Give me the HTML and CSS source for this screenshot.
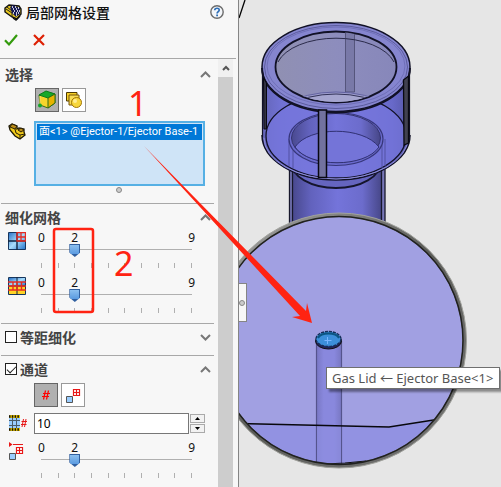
FILE: index.html
```html
<!DOCTYPE html>
<html lang="zh-CN">
<head>
<meta charset="utf-8">
<title>局部网格设置</title>
<link rel="stylesheet" href="styles.css">
</head>
<body>
<main class="app">
  <aside class="panel">
    <header class="panel-head">
      <div class="title-row">
        <svg class="title-icon" width="18" height="17" viewBox="0 0 18 17">
          <path d="M1 4 5 1 15 2 17 5V10L13 15 8 13 1 8Z" fill="#e8c81e" stroke="#111" stroke-width="1.4"/>
          <path d="M2 5 8 9V13M3 3 8 7 9 4" fill="none" stroke="#222"/>
          <path d="M6 3 9 1 16 4V10L12 13 8 9Z" fill="#161a55"/>
          <path d="M8 3h1M11 3h1M14 4h1M9 5h1M12 5h1M10 7h1M13 7h1M15 7h1M9 9h1M12 9h1M14 9h1M12 11h1" stroke="#fff" stroke-width="1.3"/>
          <path d="M9 14 12 16 16 12" fill="none" stroke="#111" stroke-width="1.5"/>
        </svg>
        <h1 class="title">局部网格设置</h1>
        <button class="bare" type="button" aria-label="Help">
          <svg width="14" height="14" viewBox="0 0 14 14">
            <circle cx="7" cy="7" r="6.2" fill="#f3f6fa" stroke="#6c6c6c" stroke-width="1.4"/>
            <path d="M4.7 5.2C4.9 2.6 9.3 2.6 9.2 5.1 9.2 6.7 7.1 6.7 7.1 8.6" fill="none" stroke="#2d6db5" stroke-width="1.7"/>
            <path d="M6.2 9.6h1.8v1.7H6.2z" fill="#2d6db5"/>
          </svg>
        </button>
      </div>
      <div class="action-row">
        <button class="bare" type="button" aria-label="OK">
          <svg width="14" height="12" viewBox="0 0 14 12"><path d="M1 6.2 5 10.4 13 1" fill="none" stroke="#339a0c" stroke-width="2.2"/></svg>
        </button>
        <button class="bare" type="button" aria-label="Cancel">
          <svg width="12" height="12" viewBox="0 0 12 12"><path d="M1 1 11 11M11 1 1 11" stroke="#dd2004" stroke-width="2.2"/></svg>
        </button>
      </div>
    </header>

    <div class="panel-body">
      <div class="sections">
        <section class="section first">
          <div class="section-head">
            <h2 class="label">选择</h2>
            <button class="bare" type="button" aria-label="Collapse"><svg width="11" height="7" viewBox="0 0 11 7"><path d="M1 6 5.5 1.5 10 6" class="chevron"/></svg></button>
          </div>
          <div class="toggles">
            <button class="toggle on" type="button" aria-label="Face">
              <svg width="20" height="20" viewBox="0 0 20 20">
                <path d="M2 5 9 2 18 4V13L11 18 3 15Z" fill="#f6d52c" stroke="#3d6c14"/>
                <path d="M2 5 9 1 18 4 11 8Z" fill="#16a829" stroke="#0b7d1c"/>
                <path d="M11 8 18 4V13L11 18Z" fill="#e7b400" stroke="#2c6d16"/>
                <path d="M3 6V14" stroke="#f6e36a"/>
                <circle cx="3" cy="15.5" r="2" fill="#12a52a"/>
              </svg>
            </button>
            <button class="toggle" type="button" aria-label="Body">
              <svg width="18" height="18" viewBox="0 0 18 18">
                <path d="M1.5 1.5H12V10H1.5Z" fill="#f5ce26" stroke="#4d3a03"/>
                <path d="M4 4H14V14H4Z" fill="#f8dc52" stroke="#74540a"/>
                <circle cx="11.5" cy="11.5" r="5" fill="#f7d63b" stroke="#a17505"/>
                <circle cx="10" cy="10" r="2" fill="#ffed94"/>
              </svg>
            </button>
          </div>
          <div class="row">
            <div class="row-icon">
              <svg width="18" height="17" viewBox="0 0 18 17">
                <path d="M1 3 4 1 9 3V6L11 5 16 6V9L17 12 12 16 7 13 2 7Z" fill="#f0ca1c" stroke="#1d1806" stroke-width="1.3"/>
                <path d="M4 1 9 3 7 6 2 4ZM10 7 13 5 16 7 13 9Z" fill="#b98a18" stroke="#292006"/>
                <path d="M7 6 8 10 12 12 17 11M12 12V16" fill="none" stroke="#292006"/>
              </svg>
            </div>
            <ul class="picks"><li class="pick">面&lt;1&gt; @Ejector-1/Ejector Base-1</li></ul>
          </div>
          <div class="grip"></div>
        </section>

        <section class="section">
          <div class="section-head">
            <h2 class="label">细化网格</h2>
            <button class="bare" type="button" aria-label="Collapse"><svg width="11" height="7" viewBox="0 0 11 7"><path d="M1 6 5.5 1.5 10 6" class="chevron"/></svg></button>
          </div>
          <div class="row slider-row">
            <div class="row-icon">
              <svg width="18" height="18" viewBox="0 0 18 18">
                <defs><linearGradient id="sky" x1="0" y1="0" x2="1" y2="1"><stop offset="0" stop-color="#276fc5"/><stop offset=".5" stop-color="#a8dcfb"/><stop offset="1" stop-color="#2271c9"/></linearGradient></defs>
                <path d="M.5.5h17v17H.5z" fill="url(#sky)" stroke="#17375f"/>
                <path d="M9 0V18M0 9H18" stroke="#10243f" stroke-width="1.4"/>
                <path d="M9 .5h8.5V9H9zM13 0V9M9 5h9" fill="none" stroke="#e52b22" stroke-width="1.3"/>
              </svg>
            </div>
            <div class="slider">
              <div class="scale"><span>0</span><span></span><span>2</span><span></span><span></span><span></span><span></span><span></span><span></span><span>9</span></div>
              <input class="range" type="range" min="0" max="9" value="2" aria-label="细化流体网格">
              <div class="ticks"><i></i><i></i><i></i><i></i><i></i><i></i><i></i><i></i><i></i><i></i></div>
            </div>
          </div>
          <div class="row slider-row">
            <div class="row-icon">
              <svg width="18" height="18" viewBox="0 0 18 18">
                <path d="M.5.5h17v17H.5z" fill="#ffd326" stroke="#17375f"/>
                <path d="M1 1h16v8H1z" fill="url(#sky)"/>
                <path d="M9 0V18M0 9H18" stroke="#10243f"/>
                <path d="M0 5h18M0 9h18M0 13h18M5 5v8M9 5v8M13.5 5v8" fill="none" stroke="#e52b22" stroke-width="1.4"/>
              </svg>
            </div>
            <div class="slider">
              <div class="scale"><span>0</span><span></span><span>2</span><span></span><span></span><span></span><span></span><span></span><span></span><span>9</span></div>
              <input class="range" type="range" min="0" max="9" value="2" aria-label="细化边界网格">
              <div class="ticks"><i></i><i></i><i></i><i></i><i></i><i></i><i></i><i></i><i></i><i></i></div>
            </div>
          </div>
        </section>

        <section class="section">
          <div class="section-head">
            <label class="label check"><input class="box" type="checkbox">等距细化</label>
            <button class="bare" type="button" aria-label="Expand"><svg width="11" height="7" viewBox="0 0 11 7"><path d="M1 1 5.5 5.5 10 1" class="chevron"/></svg></button>
          </div>
        </section>

        <section class="section">
          <div class="section-head">
            <label class="label check"><input class="box" type="checkbox" checked>通道</label>
            <button class="bare" type="button" aria-label="Collapse"><svg width="11" height="7" viewBox="0 0 11 7"><path d="M1 6 5.5 1.5 10 6" class="chevron"/></svg></button>
          </div>
          <div class="toggles channel">
            <button class="toggle on" type="button" aria-label="Count">
              <svg width="8" height="10" viewBox="0 0 8 10"><path d="M3.5.5 1.5 9.5M6.5.5 4.5 9.5M1 3.5H8M0 6.5H7" stroke="#f00" stroke-width="1.2"/></svg>
            </button>
            <button class="toggle" type="button" aria-label="Level">
              <svg width="16" height="16" viewBox="0 0 16 16">
                <path d="M1.5 9.5h6v6h-6z" fill="#9acdff" stroke="#555"/>
                <path d="M8.5 2.5h6v6h-6zM11.5 2v7M8 5.5h7" fill="#fff" stroke="#e81818" stroke-width="1.2"/>
              </svg>
            </button>
          </div>
          <div class="row number-row">
            <div class="row-icon">
              <svg width="19" height="16" viewBox="0 0 19 16">
                <path d="M1 2h11v12H1z" fill="#9acdff"/>
                <path d="M1 5.5H12M1 10.5H12M4.5 2v12M8.5 2v12" stroke="#4b5b66"/>
                <path d="M1 1.5h11M1 14.5h11" stroke="#e6c200" stroke-width="3"/>
                <path d="M1 1.5h11M1 14.5h11" stroke="#111" stroke-width="2.5" stroke-dasharray="1.5 1.3"/>
                <path d="M15.5 4 14 12M18 4 16.5 12M13.5 6.5H19M13 9.5H18.5" stroke="#e81818"/>
              </svg>
            </div>
            <input class="number" type="text" value="10" aria-label="网格数">
            <div class="spin">
              <button class="step" type="button" aria-label="Increase"><svg width="5" height="3" viewBox="0 0 5 3"><path d="M0 3 2.5 0 5 3Z"/></svg></button>
              <button class="step" type="button" aria-label="Decrease"><svg width="5" height="3" viewBox="0 0 5 3"><path d="M0 0 2.5 3 5 0Z"/></svg></button>
            </div>
          </div>
          <div class="row slider-row">
            <div class="row-icon">
              <svg width="16" height="19" viewBox="0 0 16 19">
                <path d="M1 0 4.5 2.5 1 5Z" fill="#e81818"/>
                <path d="M5 2.5H15" stroke="#e81818"/>
                <path d="M8.5 5.5h6v6h-6zM11.5 5v7M8 8.5h7" fill="#fff" stroke="#e81818" stroke-width="1.2"/>
                <path d="M1.5 11.5h6v6h-6z" fill="#9acdff" stroke="#555"/>
              </svg>
            </div>
            <div class="slider">
              <div class="scale"><span>0</span><span></span><span>2</span><span></span><span></span><span></span><span></span><span></span><span></span><span>9</span></div>
              <input class="range" type="range" min="0" max="9" value="2" aria-label="最大通道细化级别">
              <div class="ticks"><i></i><i></i><i></i><i></i><i></i><i></i><i></i><i></i><i></i><i></i></div>
            </div>
          </div>
        </section>
      </div>
      <div class="scrollbar">
        <button class="bare scroll-up" type="button" aria-label="Scroll up"><svg width="8" height="6" viewBox="0 0 8 6"><path d="M1 5 4 2 7 5" fill="none" stroke="#555" stroke-width="2"/></svg></button>
        <div class="scroll-thumb"></div>
      </div>
    </div>
  </aside>

  <div class="viewport">
    <svg class="model" viewBox="239 0 262 487" preserveAspectRatio="xMinYMin meet">
      <defs>
        <linearGradient id="body" x1="0" x2="1"><stop offset="0" stop-color="#6465b8"/><stop offset=".12" stop-color="#7071d3"/><stop offset=".5" stop-color="#7b7be0"/><stop offset=".88" stop-color="#6869c9"/><stop offset="1" stop-color="#5556a6"/></linearGradient>
        <linearGradient id="tube" x1="0" x2="1"><stop offset="0" stop-color="#49498f"/><stop offset=".2" stop-color="#6262bd"/><stop offset=".5" stop-color="#7474da"/><stop offset=".78" stop-color="#6c6ccc"/><stop offset="1" stop-color="#464687"/></linearGradient>
        <linearGradient id="bore" x1="0" x2="1"><stop offset="0" stop-color="#9090b2"/><stop offset=".5" stop-color="#8d8dbd"/><stop offset="1" stop-color="#8787ba"/></linearGradient>
        <linearGradient id="ring" x1="0" y1="0" x2="1" y2="1"><stop offset="0" stop-color="#aaa"/><stop offset=".5" stop-color="#5b5c58"/><stop offset="1" stop-color="#777"/></linearGradient>
        <linearGradient id="pin" x1="0" x2="1"><stop offset="0" stop-color="#7776c2"/><stop offset=".3" stop-color="#8988dd"/><stop offset=".7" stop-color="#8988dd"/><stop offset="1" stop-color="#7776c0"/></linearGradient>
        <clipPath id="bore-clip"><ellipse cx="336" cy="67" rx="60" ry="35"/></clipPath>
        <clipPath id="lens"><circle cx="339" cy="340.5" r="124"/></clipPath>
      </defs>
      <path d="M245 0 239 18" stroke="#000" stroke-width="1.3"/>
      <path d="M289 130V224H385V130Z" fill="#7777b8"/>
      <path d="M293 140V224H382V140Z" fill="url(#tube)"/>
      <path d="M289.5 140V224M292.5 165V224M381.5 165V224M385 140V224" stroke="#17172b" stroke-width="1.3" fill="none"/>
      <path d="M291 162A45 26 0 0 0 381 162Z" fill="#6565bf" stroke="#15152c" stroke-width="1.8"/>
      <path d="M262 67V136A74 44.5 0 0 0 410 136V67Z" fill="url(#body)"/>
      <path d="M266 136A70 42 0 0 1 406 136A70 42 0 0 1 266 136Z" fill="#7676dd" fill-opacity=".7" stroke="#111126" stroke-width="1.3"/>
      <path d="M262 135A74 45 0 0 0 410 135" fill="none" stroke="#111126" stroke-width="1.5"/>
      <path d="M264 138A72 41 0 0 0 408 138" fill="none" stroke="#8c8cd6"/>
      <path d="M289 139V166M293 139V168M382 139V168M385 139V166" stroke="#5353a2" fill="none"/>
      <ellipse cx="336" cy="139" rx="47" ry="26.5" fill="#6b6bce" stroke="#37377b" stroke-width="1.2"/>
      <ellipse cx="336" cy="138" rx="44.5" ry="24.5" fill="url(#tube)" stroke="#33336f"/>
      <path d="M295 147C309 126 363 126 379 147 365 168 309 168 295 147Z" fill="#7474d8" stroke="#303072"/>
      <ellipse cx="336" cy="67" rx="74" ry="44.5" fill="#8585cf" stroke="#111126" stroke-width="1.5"/>
      <ellipse cx="336" cy="67" rx="71.5" ry="41.5" fill="none" stroke="#5b5b9d"/>
      <ellipse cx="336" cy="66" rx="69" ry="39" fill="none" stroke="#6a6ab2" stroke-width=".8"/>
      <ellipse cx="336" cy="67" rx="60.5" ry="35.5" fill="url(#bore)" stroke="#111126" stroke-width="1.8"/>
      <g clip-path="url(#bore-clip)">
        <path d="M345.5 32V92H354.5V32Z" fill="#7979a8" stroke="#55557c"/>
        <ellipse cx="336" cy="136" rx="74" ry="44" fill="#9d9dcc" stroke="#6262a0"/>
        <ellipse cx="336" cy="136" rx="71" ry="42" fill="#a5a5cf" stroke="#333359"/>
        <path d="M278 62A60 32 0 0 1 394 62" fill="none" stroke="#2b2b4a"/>
      </g>
      <path d="M262 68A74 44.5 0 0 0 410 68" fill="none" stroke="#111126" stroke-width="1.8"/>
      <path d="M262.5 68V137M409.5 68V137" stroke="#111126" stroke-width="1.2"/>
      <path d="M263.5 78 266.5 83V129H264Z" fill="#333344" stroke="#090911"/>
      <path d="M403.5 80 408.5 76V143L404 145Z" fill="#414150" stroke="#090911" stroke-width="1.3"/>
      <path d="M318.5 110H326.5V177.5H318.5Z" fill="#72729f" stroke="#080812" stroke-width="1.5"/>

      <circle cx="339" cy="340.5" r="125" fill="#a1a0e2"/>
      <g clip-path="url(#lens)">
        <path d="M239 423.5 389 427 440 419V470H239Z" fill="#9292e2"/>
        <path d="M316 341V470H342V341Z" fill="url(#pin)"/>
        <path d="M316.5 341V470M341.5 341V470" stroke="#55548d" stroke-width="1.2"/>
        <path d="M317 425H341V470H317Z" fill="#8f8ee1" fill-opacity=".7"/>
        <path d="M239 423.5 389 427 440 419" fill="none" stroke="#08080d" stroke-width="1.3"/>
        <path d="M325 464 345 463 366 461" fill="none" stroke="#111" stroke-width="1.2"/>
      </g>
      <circle cx="339" cy="340.5" r="125.5" fill="none" stroke="url(#ring)" stroke-width="4"/>
      <circle cx="339" cy="340.5" r="124" fill="none" stroke="#20211f" stroke-width="1.5"/>
      <circle cx="339" cy="340.5" r="127.5" fill="none" stroke="#a1a29d" stroke-width="1"/>
      <ellipse cx="328.5" cy="341" rx="13" ry="8" fill="#24245b" stroke="#111"/>
      <ellipse cx="328.5" cy="339" rx="12.5" ry="7.5" fill="#3c8fda" stroke="#162e58" stroke-width="1.4" stroke-dasharray="3 1"/>
      <path d="M318 338C321 332 336 332 339 338" fill="none" stroke="#0c5683" stroke-width="2"/>
      <path d="M324.5 340.5h7M327.5 337v7" stroke="#78b5ff"/>
    </svg>
    <button class="handle" type="button" aria-label="Toggle panel"><span class="dot"></span></button>
    <div class="tooltip" role="tooltip">Gas Lid ← Ejector Base&lt;1&gt;</div>
  </div>

  <svg class="notes" viewBox="0 0 501 487" preserveAspectRatio="xMinYMin meet">
    <path d="M144 146 306 311 307 303 312 323 292 317 300 316Z" fill="#ff2312"/>
    <rect x="54" y="229" width="39" height="83" rx="2" fill="none" stroke="#ff2312" stroke-width="2.5"/>
    <text class="note" x="128" y="116">1</text>
    <text class="note" x="114" y="276">2</text>
  </svg>
</main>
</body>
</html>
```
FILE: styles.css
```css
* { box-sizing: border-box; }

body {
  margin: 0;
  font: 13px/18px "Noto Sans", "Noto Sans CJK SC", sans-serif;
  color: #111;
  background: #e6e6e6;
}

.app {
  position: relative;
  display: flex;
  height: 100vh;
  overflow: hidden;
}

.panel {
  display: flex;
  flex-direction: column;
  flex: 0 0 239px;
  min-width: 0;
  background: #f7f7f7;
  border-right: 1px solid #858585;
}

.bare {
  display: flex;
  padding: 0;
  border: 0;
  background: none;
}

.panel-head {
  height: 59px;
  margin-right: 2px;
  padding: 2px 12px 0 4px;
  border-bottom: 1px solid #a8a8a8;
}

.title-row {
  display: flex;
  align-items: center;
  gap: 4px;
  height: 20px;
}

.title {
  flex: 1;
  margin: 0;
  font: 500 14px/20px "Noto Sans CJK SC", sans-serif;
}

.action-row {
  display: flex;
  align-items: center;
  gap: 15px;
  height: 36px;
}

.panel-body {
  display: flex;
  flex: 1;
  min-height: 0;
  padding-right: 5px;
}

.sections {
  flex: 1;
  min-width: 0;
  padding: 0 4px 0 1px;
}

.section {
  padding-bottom: 3px;
  border-top: 1px solid #a8a8a8;
}

.section + .section { min-height: 32px; }

.first {
  border-top: 0;
  padding: 2px 0 10px;
}

.section-head {
  display: flex;
  align-items: center;
  justify-content: space-between;
  height: 26px;
  padding: 0 3px 0 4px;
}

.label {
  margin: 0;
  font: 700 14px/20px "Noto Sans CJK SC", sans-serif;
  color: #444;
}

.check {
  display: flex;
  align-items: center;
  gap: 3px;
}

.box {
  appearance: none;
  width: 12px;
  height: 12px;
  margin: 0;
  border: 1px solid #222;
  background: #fff;
}

.box:checked::before {
  content: "";
  display: block;
  width: 8px;
  height: 4px;
  margin: 2px 1px;
  border: solid #222;
  border-width: 0 0 1px 1px;
  transform: rotate(-45deg);
}

.chevron {
  fill: none;
  stroke: #777;
  stroke-width: 2;
}

.toggles {
  display: flex;
  gap: 3px;
  padding: 1px 0 9px 34px;
}

.channel { padding: 1px 0 6px 33px; }

.toggle {
  display: flex;
  align-items: center;
  justify-content: center;
  width: 24px;
  height: 24px;
  padding: 0;
  border: 1px solid #999;
  background: #fff;
}

.on {
  border-color: #666;
  background: #b0b0b0;
}

.row {
  display: flex;
  padding-right: 9px;
}

.row-icon {
  flex: 0 0 33px;
  padding: 2px 0 0 7px;
}

.row-icon svg { display: block; }

.picks {
  flex: 1;
  min-width: 0;
  height: 65px;
  margin: 0;
  padding: 1px;
  border: 2px solid #56b0e4;
  background: #cfe4f7;
  list-style: none;
}

.pick {
  padding-left: 2px;
  overflow: hidden;
  white-space: nowrap;
  font: 11px/16px Roboto, "Noto Sans CJK SC", sans-serif;
  color: #fff;
  background: #0078d7;
}

.grip,
.dot {
  display: block;
  width: 6px;
  height: 6px;
  border: 1px solid #888;
  border-radius: 50%;
  background: #ccc;
}

.grip { margin: 1px auto 0 115px; }

.slider-row {
  height: 45px;
  padding-right: 14px;
}

.slider {
  flex: 1;
  min-width: 0;
  margin-left: -1px;
}

.scale,
.ticks {
  display: grid;
  grid-template-columns: repeat(10, 1fr);
  justify-items: center;
}

.scale {
  height: 14px;
  font-size: 12px;
  line-height: 15px;
}

.ticks i {
  width: 1px;
  height: 5px;
  background: #b0b0b0;
}

.range {
  appearance: none;
  display: block;
  width: calc(100% - 6px);
  height: 13px;
  margin: 0 3px 6px;
  background: linear-gradient(#b0b0b0, #b0b0b0) center 5px / calc(100% - 10px) 1px no-repeat;
}

.range::-webkit-slider-thumb {
  appearance: none;
  width: 11px;
  height: 13px;
  background: linear-gradient(#8cc0f0, #5a9ae0) center 1px / 9px 9px no-repeat, #305f9f;
  clip-path: polygon(0 0, 100% 0, 100% 65%, 50% 100%, 0 65%);
}

.number-row { margin-bottom: 6px; }

.number {
  flex: 1;
  min-width: 0;
  height: 21px;
  padding: 0 2px;
  border: 1px solid #777;
  background: #fff;
  font: 12px/18px "Noto Sans", sans-serif;
}

.spin {
  display: flex;
  flex-direction: column;
  gap: 1px;
  width: 16px;
  padding: 1px 0 0 1px;
}

.step {
  display: flex;
  align-items: center;
  justify-content: center;
  height: 9px;
  padding: 0;
  border: 1px solid #aaa;
  background: #f2f2f2;
}

.scrollbar {
  display: flex;
  flex-direction: column;
  width: 15px;
  background: #f0f0f0;
}

.scroll-up {
  align-items: center;
  justify-content: center;
  height: 18px;
}

.scroll-thumb {
  flex: 1;
  background: #cdcdcd;
}

.viewport {
  position: relative;
  flex: 1;
  min-width: 0;
  overflow: hidden;
  background: #e6e6e6;
}

.model {
  position: absolute;
  left: 0;
  top: 0;
  width: 262px;
  height: 487px;
}

.handle {
  position: absolute;
  left: 0;
  top: 283px;
  display: flex;
  align-items: center;
  width: 8px;
  height: 39px;
  padding: 0;
  border: 1px solid #858585;
  border-left: 0;
  background: #f7f7f7;
}

.tooltip {
  position: absolute;
  left: 87px;
  top: 367px;
  padding: 1px 6px 1px 5px;
  border: 1px solid #6f6f6f;
  background: #fff;
  box-shadow: 3px 3px 2px rgba(0, 0, 0, .4);
  color: #555;
  white-space: nowrap;
}

.notes {
  position: absolute;
  left: 0;
  top: 0;
  width: 501px;
  height: 487px;
  pointer-events: none;
}

.note {
  fill: #ff2312;
  font: 34px "Noto Sans", sans-serif;
}
```
